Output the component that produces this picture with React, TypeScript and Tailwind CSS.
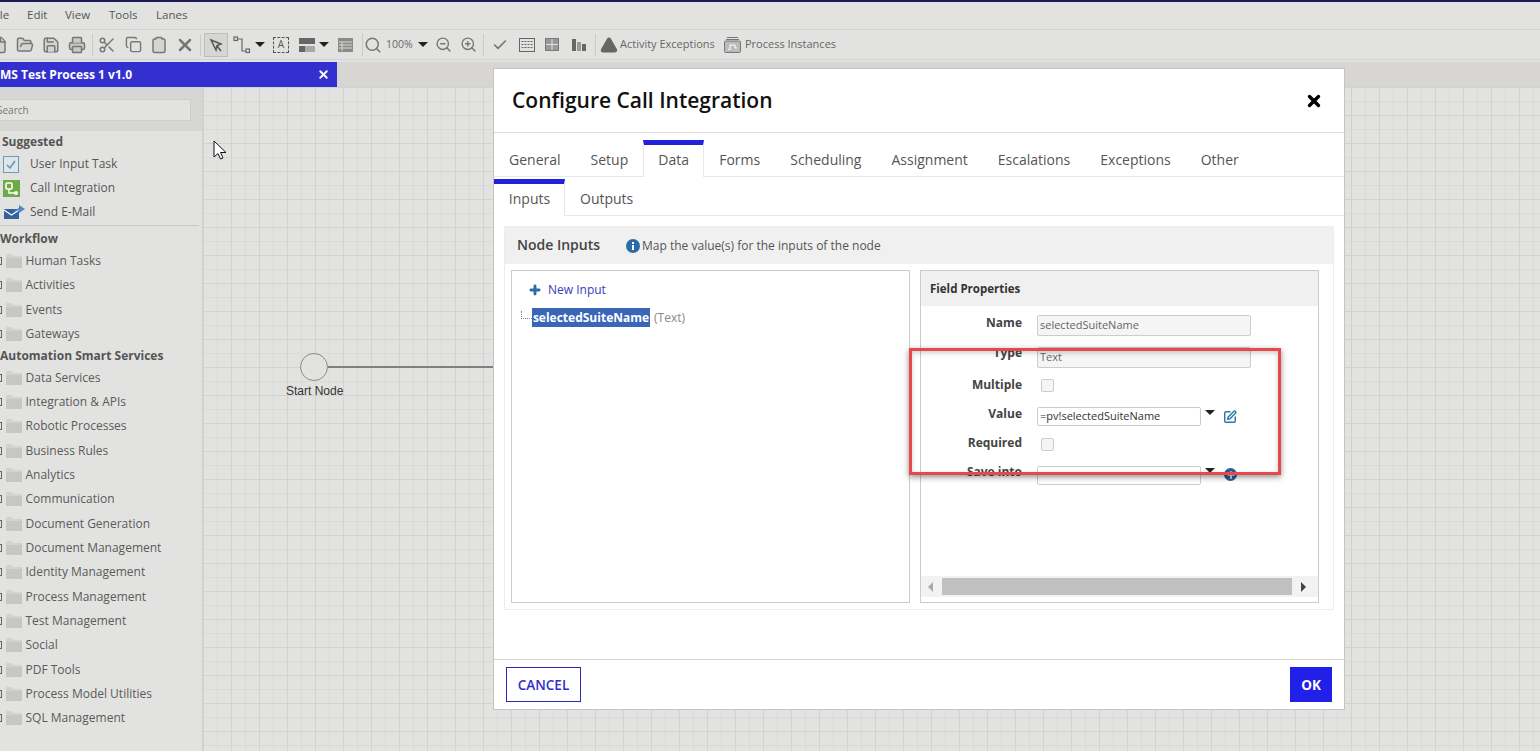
import {
  Check,
  Clipboard,
  Copy,
  File,
  FolderOpen,
  Plus,
  Printer,
  Save,
  Scissors,
  Search,
  SquarePen,
  TriangleAlert,
  X,
  ZoomIn,
  ZoomOut
} from 'lucide-react'
import clsx from 'clsx'
import type { ReactNode } from 'react'

const folders1 = ['Human Tasks', 'Activities', 'Events', 'Gateways']
const folders2 = [
  'Data Services',
  'Integration & APIs',
  'Robotic Processes',
  'Business Rules',
  'Analytics',
  'Communication',
  'Document Generation',
  'Document Management',
  'Identity Management',
  'Process Management',
  'Test Management',
  'Social',
  'PDF Tools',
  'Process Model Utilities',
  'SQL Management'
]
const tabs = ['General', 'Setup', 'Data', 'Forms', 'Scheduling', 'Assignment', 'Escalations', 'Exceptions', 'Other']

const Tool = ({ w = 26, children }: { w?: number; children: ReactNode }) => (
  <div className="flex h-full shrink-0 items-center justify-center" style={{ width: w }}>
    {children}
  </div>
)

const Sep = () => (
  <div className="flex h-full w-[4px] shrink-0 items-center justify-center">
    <div className="h-[22px] w-px bg-[#cbcbc9]" />
  </div>
)

const Caret = () => (
  <div className="h-0 w-0 border-x-[5px] border-t-[5px] border-x-transparent border-t-[#222]" />
)

const FolderRow = ({ name }: { name: string }) => (
  <div className="flex h-[24.33px] items-center">
    <div className="ml-[-4px] h-[8px] w-[6px] shrink-0 border border-[#666]" />
    <svg width="16" height="14" viewBox="0 0 16 14" className="ml-[4px] shrink-0">
      <path d="M0 2V0H6L7 2H16V4H0Z" fill="#d2d2d0" />
      <rect y="4" width="16" height="10" fill="#c6c6c4" />
    </svg>
    <span className="ml-[3.5px] text-[12px] whitespace-nowrap text-[#5a5a5a]">{name}</span>
  </div>
)

const Heading = ({ className, children }: { className?: string; children: ReactNode }) => (
  <div className={clsx('flex items-center text-[12px] font-bold whitespace-nowrap text-[#555]', className)}>
    {children}
  </div>
)

const Label = ({ className, children }: { className?: string; children: ReactNode }) => (
  <div className={clsx('w-[101px] shrink-0 text-right text-[12px] font-bold whitespace-nowrap text-[#444]', className)}>
    {children}
  </div>
)

const App = () => {
  return (
    <div className="relative flex h-[751px] w-[1540px] flex-col overflow-hidden bg-[#e2e3e1] font-['Open_Sans',sans-serif]">
      <div className="h-[2px] bg-[#1b1b5c]" />

      <div className="ml-[-9px] flex h-[27px] items-center pb-[1px] text-[11.5px] text-[#555]">
        <span className="w-[36px]">File</span>
        <span className="w-[38px]">Edit</span>
        <span className="w-[44px]">View</span>
        <span className="w-[47px]">Tools</span>
        <span>Lanes</span>
      </div>

      <div className="ml-[-14px] flex h-[31px] items-center border-y border-[#d2d2d0] text-[#777]">
        <Tool><File size={18} fill="#d4d4d2" /></Tool>
        <Tool><FolderOpen size={18} fill="#d4d4d2" /></Tool>
        <Tool><Save size={18} fill="#d4d4d2" /></Tool>
        <Tool><Printer size={18} fill="#c8c8c6" /></Tool>
        <Sep />
        <Tool><Scissors size={18} /></Tool>
        <Tool><Copy size={17} /></Tool>
        <Tool><Clipboard size={18} fill="#d4d4d2" /></Tool>
        <Tool><X size={20} strokeWidth={3} /></Tool>
        <Sep />
        <div className="mx-[2px] flex h-[24px] w-[24px] shrink-0 items-center justify-center border border-[#bdbdbb] bg-[#d6d6d4]">
          <svg width="14" height="14" viewBox="0 0 14 14" fill="none" stroke="#555" strokeWidth="1.5">
            <path d="M2 2L12 6L8 7.5L7 12ZM8 8L12 13" />
          </svg>
        </div>
        <Tool w={24}>
          <svg width="18" height="18" viewBox="0 0 18 18" fill="none" stroke="#666" strokeWidth="1.2">
            <rect x="1" y="1" width="3.5" height="3.5" />
            <rect x="13" y="13" width="3.5" height="3.5" />
            <path d="M4.5 3H9V15H13" />
          </svg>
        </Tool>
        <Tool w={12}><Caret /></Tool>
        <Tool w={30}>
          <div className="flex h-[16px] w-[16px] items-center justify-center border border-dashed border-[#555] text-[10px] text-[#555]">A</div>
        </Tool>
        <Tool w={22}>
          <svg width="16" height="14" viewBox="0 0 16 14">
            <rect width="16" height="6" fill="#666" />
            <rect y="8" width="6" height="6" fill="#666" />
            <rect x="6" y="8" width="10" height="6" fill="#a8a8a6" />
          </svg>
        </Tool>
        <Tool w={12}><Caret /></Tool>
        <Tool w={30}>
          <svg width="15" height="14" viewBox="0 0 15 14">
            <rect width="15" height="14" fill="#8a8a88" />
            <path d="M1 4H14M1 7H14M1 10H14M4 4V13" stroke="#d8d8d6" strokeWidth="1" />
          </svg>
        </Tool>
        <Sep />
        <Tool w={18}><Search size={18} /></Tool>
        <div className="ml-[4px] w-[30px] shrink-0 text-[10.5px] whitespace-nowrap text-[#666]">100%</div>
        <Tool w={14}><Caret /></Tool>
        <Tool w={26}><ZoomOut size={17} /></Tool>
        <Tool w={25}><ZoomIn size={17} /></Tool>
        <Sep />
        <Tool w={30}><Check size={16} strokeWidth={2.5} /></Tool>
        <Tool w={24}>
          <svg width="16" height="14" viewBox="0 0 16 14" fill="none" stroke="#666">
            <rect x=".5" y=".5" width="15" height="13" />
            <path d="M2.5 3.5H13.5M2.5 6.5H13.5M2.5 9.5H13.5" strokeDasharray="2 1" />
          </svg>
        </Tool>
        <Tool w={26}>
          <svg width="14" height="13" viewBox="0 0 14 13">
            <rect width="14" height="13" fill="#999" />
            <path d="M7 0V13M0 6.5H14" stroke="#e2e3e1" />
            <rect x=".5" y=".5" width="13" height="12" fill="none" stroke="#777" />
          </svg>
        </Tool>
        <Tool w={28}>
          <svg width="14" height="12" viewBox="0 0 14 12">
            <rect x="0" y="0" width="4" height="12" fill="#666" />
            <rect x="5" y="3" width="4" height="9" fill="#999" />
            <rect x="10" y="5" width="4" height="7" fill="#666" />
          </svg>
        </Tool>
        <Sep />
        <Tool w={24}><TriangleAlert size={18} fill="#666" stroke="#666" /></Tool>
        <span className="ml-[-1px] w-[100px] shrink-0 text-[11px] whitespace-nowrap text-[#666]">Activity Exceptions</span>
        <Tool w={24}>
          <svg width="17" height="17" viewBox="0 0 17 17" fill="none" stroke="#777">
            <path d="M3 1.5H14M2 3.5H15" />
            <rect x=".5" y="5" width="16" height="11.5" rx="1" fill="#bbb" />
            <path d="M4 13.5H6V9H11V12H13" stroke="#fff" />
          </svg>
        </Tool>
        <span className="ml-[1px] text-[11px] whitespace-nowrap text-[#666]">Process Instances</span>
      </div>

      <div className="mt-[2px] flex h-[26px] border-b border-[#d2d2d0] bg-[#d8d6d5]">
        <div className="flex w-[337px] items-center justify-between bg-[#3430d0] pr-[7px] text-[12px] font-bold text-white">
          <span>MS Test Process 1 v1.0</span>
          <X size={13} strokeWidth={3.5} />
        </div>
      </div>

      <div className="flex min-h-0 flex-1">
        <div className="w-[203px] shrink-0 border-r border-[#cfcfcd]">
          <div className="flex h-[43px] items-center bg-[#d6d6d4]">
            <div className="ml-[-5px] flex h-[22px] w-[196px] items-center border border-[#cdcdcb] bg-[#e2e3e1] pt-[1px] pl-[1px] text-[10px] text-[#777]">
              Search
            </div>
          </div>
          <div className="pl-[2px]">
            <Heading className="h-[21px]">Suggested</Heading>
            <div className="flex h-[24px] items-center">
              <svg width="16" height="17" viewBox="0 0 16 17" className="ml-[1px]">
                <rect x=".5" y=".5" width="15" height="16" fill="#dfe6ea" stroke="#6f9ab5" />
                <path d="M4 9L7 12L12 5" fill="none" stroke="#5a8fc0" strokeWidth="1.4" />
              </svg>
              <span className="ml-[11px] text-[12px] text-[#555]">User Input Task</span>
            </div>
            <div className="flex h-[24px] items-center">
              <svg width="17" height="17" viewBox="0 0 17 17" className="ml-[1px]">
                <rect width="17" height="17" fill="#6eab45" />
                <rect x="3" y="3" width="6" height="6" rx="1" fill="none" stroke="#fff" strokeWidth="1.6" />
                <path d="M6 9V13H12" fill="none" stroke="#fff" strokeWidth="1.4" />
                <circle cx="13" cy="13" r="2" fill="#fff" />
              </svg>
              <span className="ml-[10px] text-[12px] text-[#555]">Call Integration</span>
            </div>
            <div className="flex h-[24px] items-center">
              <svg width="21" height="14" viewBox="0 0 21 14" className="ml-[2px]">
                <rect x="0" y="4" width="15" height="10" fill="#35629f" />
                <path d="M0 5L7.5 10L15 5" fill="none" stroke="#fff" strokeWidth="1.2" />
                <path d="M9 6L15 3V0L21 4L15 8V5.5Z" fill="#4f86c4" />
              </svg>
              <span className="ml-[5px] text-[12px] text-[#555]">Send E-Mail</span>
            </div>
          </div>
          <div className="mt-[1px] mr-[3px] mb-[2px] h-px bg-[#c9c9c7]" />
          <Heading className="mb-[-1px] h-[22px]">Workflow</Heading>
          {folders1.map((f) => (
            <FolderRow key={f} name={f} />
          ))}
          <Heading className="mt-[-1px] mb-[-1.7px] h-[22px]">Automation Smart Services</Heading>
          {folders2.map((f) => (
            <FolderRow key={f} name={f} />
          ))}
        </div>

        <div className="relative flex-1 bg-[#e2e3e1] bg-[linear-gradient(#d2d2d0_1px,transparent_1px),linear-gradient(90deg,#d2d2d0_1px,transparent_1px),linear-gradient(#dadad8_1px,transparent_1px),linear-gradient(90deg,#dadad8_1px,transparent_1px)] bg-[size:28px_28px,28px_28px,14px_14px,14px_14px] bg-[position:0_-1px,0_0,0_-1px,0_0]">
          <div className="absolute top-[265px] left-[97px] h-[28px] w-[28px] rounded-full border border-[#8a8a88] bg-[#e2e3e1]" />
          <div className="absolute top-[278px] left-[125px] h-[2px] w-[170px] bg-[#808080]" />
          <div className="absolute top-[294px] left-[83px] font-['Liberation_Sans',sans-serif] text-[12px] text-[#333]">Start Node</div>
          <svg width="14" height="20" viewBox="0 0 14 20" className="absolute top-[52px] left-[10px]">
            <path d="M1 1V17L5 13.5L7.5 19L10 18L7.5 12.5H13Z" fill="#fff" stroke="#111" strokeWidth="1" />
          </svg>
        </div>
      </div>

      <div className="absolute top-[68px] left-[493px] flex h-[642px] w-[852px] flex-col border border-[#c4c4c4] bg-white">
        <div className="flex h-[64px] shrink-0 items-center justify-between border-b border-[#ddd] pr-[21px] pl-[18px]">
          <span className="text-[21px] font-semibold text-[#111]">Configure Call Integration</span>
          <X size={18} strokeWidth={4.5} className="text-black" />
        </div>

        <div className="mt-[7px] flex h-[37px] shrink-0 border-b border-[#e8e8e8] text-[14px] text-[#555]">
          {tabs.map((t) =>
            t === 'Data' ? (
              <div key={t} className="mb-[-1px] flex w-[61px] items-center justify-center border-x border-t-[5px] border-x-[#e8e8e8] border-t-[#2222dd] bg-white pb-[4px]">
                {t}
              </div>
            ) : (
              <div key={t} className="flex items-center px-[15px] pt-[2px] whitespace-nowrap">{t}</div>
            )
          )}
        </div>

        <div className="mt-[2px] flex h-[37px] shrink-0 border-b border-[#e8e8e8] text-[14px] text-[#555]">
          <div className="mb-[-1px] flex w-[71px] items-center justify-center border-t-[5px] border-r border-t-[#2222dd] border-r-[#e8e8e8] bg-white pb-[4px] pl-[1px]">Inputs</div>
          <div className="flex items-center px-[15px] pt-[3px]">Outputs</div>
        </div>

        <div className="mx-[10px] mt-[10px] flex h-[384px] shrink-0 flex-col border border-[#ececec]">
          <div className="flex h-[37px] shrink-0 items-center bg-[#f0f0f0] pl-[12px]">
            <span className="mb-[2px] text-[14px] font-semibold text-[#444]">Node Inputs</span>
            <svg width="14" height="14" viewBox="0 0 14 14" className="ml-[26px]">
              <circle cx="7" cy="7" r="7" fill="#2b6ca8" />
              <rect x="6" y="6" width="2" height="5" fill="#fff" />
              <rect x="6" y="3" width="2" height="2" fill="#fff" />
            </svg>
            <span className="ml-[2px] text-[12px] text-[#555]">Map the value(s) for the inputs of the node</span>
          </div>

          <div className="flex flex-1 gap-[10px] px-[6px] pt-[6px] pb-[6px]">
            <div className="w-[399px] border border-[#ccc]">
              <div className="mt-[10px] flex h-[18px] items-center pl-[16px]">
                <Plus size={14} strokeWidth={5} className="text-[#2b6ca8]" />
                <span className="ml-[6px] text-[12px] text-[#3b3bb8]">New Input</span>
              </div>
              <div className="mt-[9px] flex h-[19px] items-center pl-[9px]">
                <div className="mb-[6px] h-[8px] w-[11px] border-b border-l border-dotted border-[#888]" />
                <span className="flex h-[19px] w-[118px] items-center justify-center bg-[#3a66b8] text-[12px] font-bold text-white">selectedSuiteName</span>
                <span className="ml-[4px] text-[12px] text-[#888]">(Text)</span>
              </div>
            </div>

            <div className="flex w-[399px] flex-col border border-[#ccc]">
              <div className="flex h-[35px] shrink-0 items-center bg-[#f0f0f0] pl-[9px] text-[11.5px] font-bold text-[#333]">Field Properties</div>
              <div className="flex flex-1 flex-col">
                <div className="mt-[9px] flex h-[20px] items-start gap-[15px]">
                  <Label className="mt-[-1px]">Name</Label>
                  <div className="flex h-[21px] w-[214px] items-center rounded-[2px] border border-[#ccc] bg-[#f5f5f5] pl-[2px] text-[11px] text-[#666]">selectedSuiteName</div>
                </div>
                <div className="mt-[12px] flex h-[20px] items-start gap-[15px]">
                  <Label className="mt-[-3px]">Type</Label>
                  <div className="flex h-[21px] w-[214px] items-center rounded-[2px] border border-[#ccc] bg-[#f5f5f5] pl-[2px] text-[11px] text-[#666]">Text</div>
                </div>
                <div className="mt-[8px] flex h-[20px] items-center gap-[15px]">
                  <Label>Multiple</Label>
                  <div className="ml-[4px] h-[13px] w-[13px] rounded-[2px] border border-[#ccc] bg-[#f5f5f5]" />
                </div>
                <div className="mt-[12px] flex h-[20px] items-start gap-[15px]">
                  <Label className="mt-[-2px]">Value</Label>
                  <div className="flex h-[19px] w-[164px] items-center rounded-[2px] border border-[#ccc] bg-white pl-[2px] text-[11px] text-[#333]">=pv!selectedSuiteName</div>
                  <div className="mt-[3px] ml-[-11px]"><Caret /></div>
                  <SquarePen size={14} strokeWidth={2.5} className="mt-[3px] ml-[-7px] text-[#2b7ba8]" />
                </div>
                <div className="mt-[7px] flex h-[20px] items-center gap-[15px]">
                  <Label className="mt-[-2px]">Required</Label>
                  <div className="ml-[4px] h-[13px] w-[13px] rounded-[2px] border border-[#ccc] bg-[#f5f5f5]" />
                </div>
                <div className="mt-[12px] flex h-[20px] items-start gap-[15px]">
                  <Label className="mt-[-3px]">Save into</Label>
                  <div className="h-[19px] w-[164px] rounded-[2px] border border-[#ccc] bg-white" />
                  <div className="mt-[2px] ml-[-11px]"><Caret /></div>
                  <div className="mt-[2px] ml-[-6px] flex h-[13px] w-[13px] items-center justify-center rounded-full bg-[#2b5f95]">
                    <Plus size={10} strokeWidth={4} className="text-white" />
                  </div>
                </div>
              </div>
              <div className="mb-[5px] flex h-[21px] shrink-0 items-center bg-[#f2f2f2]">
                <div className="ml-[7px] h-0 w-0 border-y-[5px] border-r-[5px] border-y-transparent border-r-[#aaa]" />
                <div className="mx-[9px] h-[17px] w-[350px] bg-[#c0c0c0]" />
                <div className="h-0 w-0 border-y-[5px] border-l-[5px] border-y-transparent border-l-[#444]" />
              </div>
            </div>
          </div>
        </div>

        <div className="mt-auto flex h-[50px] shrink-0 items-center justify-between border-t border-[#d4d4d4] px-[12px]">
          <div className="flex h-[35px] w-[75px] items-center justify-center border border-[#2a2ab0] pt-[2px] text-[13.5px] font-semibold text-[#3030c8]">CANCEL</div>
          <div className="flex h-[35px] w-[42px] items-center justify-center bg-[#2020e8] pt-[2px] text-[13.5px] font-bold text-white">OK</div>
        </div>
      </div>

      <div className="absolute top-[348px] left-[909px] h-[127px] w-[372px] border-[3px] border-[#e5484d] shadow-[0_2px_6px_rgba(0,0,0,0.45),inset_0_2px_5px_rgba(0,0,0,0.2)]" />
    </div>
  )
}

export default App
